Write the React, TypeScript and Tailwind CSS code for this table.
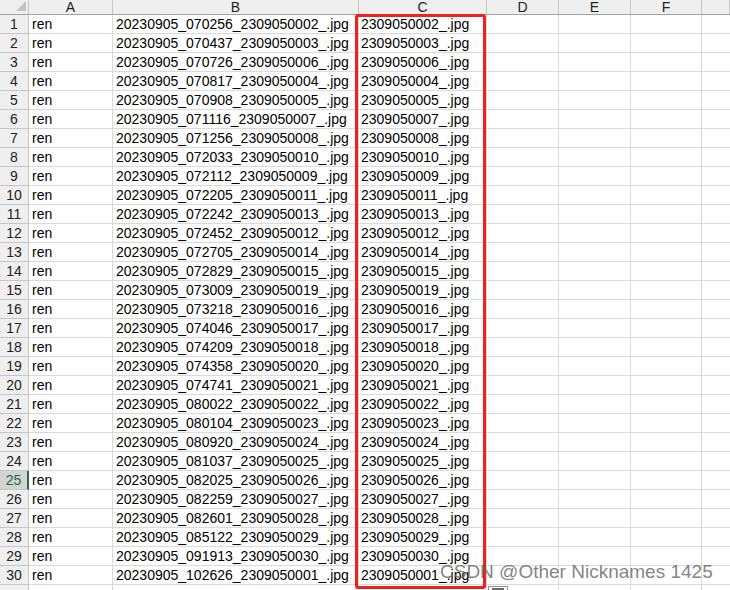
import React from 'react';

const files: [string, string][] = [
    ['070256', '2309050002'],
    ['070437', '2309050003'],
    ['070726', '2309050006'],
    ['070817', '2309050004'],
    ['070908', '2309050005'],
    ['071116', '2309050007'],
    ['071256', '2309050008'],
    ['072033', '2309050010'],
    ['072112', '2309050009'],
    ['072205', '2309050011'],
    ['072242', '2309050013'],
    ['072452', '2309050012'],
    ['072705', '2309050014'],
    ['072829', '2309050015'],
    ['073009', '2309050019'],
    ['073218', '2309050016'],
    ['074046', '2309050017'],
    ['074209', '2309050018'],
    ['074358', '2309050020'],
    ['074741', '2309050021'],
    ['080022', '2309050022'],
    ['080104', '2309050023'],
    ['080920', '2309050024'],
    ['081037', '2309050025'],
    ['082025', '2309050026'],
    ['082259', '2309050027'],
    ['082601', '2309050028'],
    ['085122', '2309050029'],
    ['091913', '2309050030'],
    ['102626', '2309050001'],
];

const cols = ['A', 'B', 'C', 'D', 'E', 'F', ''];
const gridCols = 'grid grid-cols-[29px_84px_246px_128px_72px_72px_71px_1fr]';
const SELECTED_ROW = 25;

export default function App() {
    return (
        <div className="relative w-[730px] h-[590px] overflow-hidden bg-white text-black font-['Liberation_Sans',Arial,sans-serif] text-[14px]">
            {/* column headers */}
            <div className={`${gridCols} h-[15px] bg-[#efefef] border-b border-[#a3a3a3]`}>
                <div className="relative border-r border-[#c6c6c6]">
                    <svg className="absolute left-0 top-0" width="28" height="14" viewBox="0 0 28 14">
                        <polygon points="26,1 26,11 16,11" fill="#c2c2c2" />
                    </svg>
                </div>
                {cols.map((c, i) => (
                    <div
                        key={i}
                        className="border-r border-[#c6c6c6] text-center leading-[14px] text-[#222]"
                    >
                        {c}
                    </div>
                ))}
            </div>

            {/* rows */}
            {files.map(([time, id], i) => {
                const n = i + 1;
                const selected = n === SELECTED_ROW;
                return (
                    <div key={n} className={`${gridCols} h-[19px] leading-[18px]`}>
                        <div
                            className={
                                selected
                                    ? 'bg-[#d3d3d3] border-b border-b-[#c6c6c6] border-r-2 border-r-[#217346] text-center text-[#1e6b40]'
                                    : 'bg-[#efefef] border-b border-r border-[#c6c6c6] text-center text-[#222]'
                            }
                        >
                            {n}
                        </div>
                        <div className="border-b border-r border-[#dadada] pl-[3px] whitespace-nowrap overflow-hidden">ren</div>
                        <div className="border-b border-r border-[#dadada] pl-[3px] whitespace-nowrap overflow-hidden">
                            20230905_{time}_{id}_.jpg
                        </div>
                        <div className="border-b border-r border-[#dadada] pl-[2px] whitespace-nowrap overflow-hidden">
                            {id}_.jpg
                        </div>
                        <div className="border-b border-r border-[#dadada]" />
                        <div className="border-b border-r border-[#dadada]" />
                        <div className="border-b border-r border-[#dadada]" />
                        <div className="border-b border-[#dadada]" />
                    </div>
                );
            })}

            {/* row 31, cut off */}
            <div className={`${gridCols} h-[19px]`}>
                <div className="bg-[#efefef] border-r border-[#c6c6c6]" />
                <div className="border-r border-[#dadada]" />
                <div className="border-r border-[#dadada]" />
                <div className="border-r border-[#dadada]" />
                <div className="border-r border-[#dadada]" />
                <div className="border-r border-[#dadada]" />
                <div className="border-r border-[#dadada]" />
                <div />
            </div>

            {/* red highlight around column C */}
            <div className="absolute left-[355px] top-[14px] w-[131px] h-[575px] border-[3px] border-[#f0201c] rounded-[3px]" />

            {/* paste options button, mostly off screen */}
            <div className="absolute left-[488px] top-[586px] w-[20px] h-[10px] border border-[#8e8e8e] bg-white">
                <div className="mx-[3px] mt-[1px] h-[2px] border border-[#6b6b6b]" />
            </div>

            {/* watermark */}
            <div className="absolute left-[440px] top-[561px] text-[19px] leading-[22px] whitespace-nowrap text-[rgba(100,100,100,0.8)]">
                CSDN @Other Nicknames 1425
            </div>
        </div>
    );
}
